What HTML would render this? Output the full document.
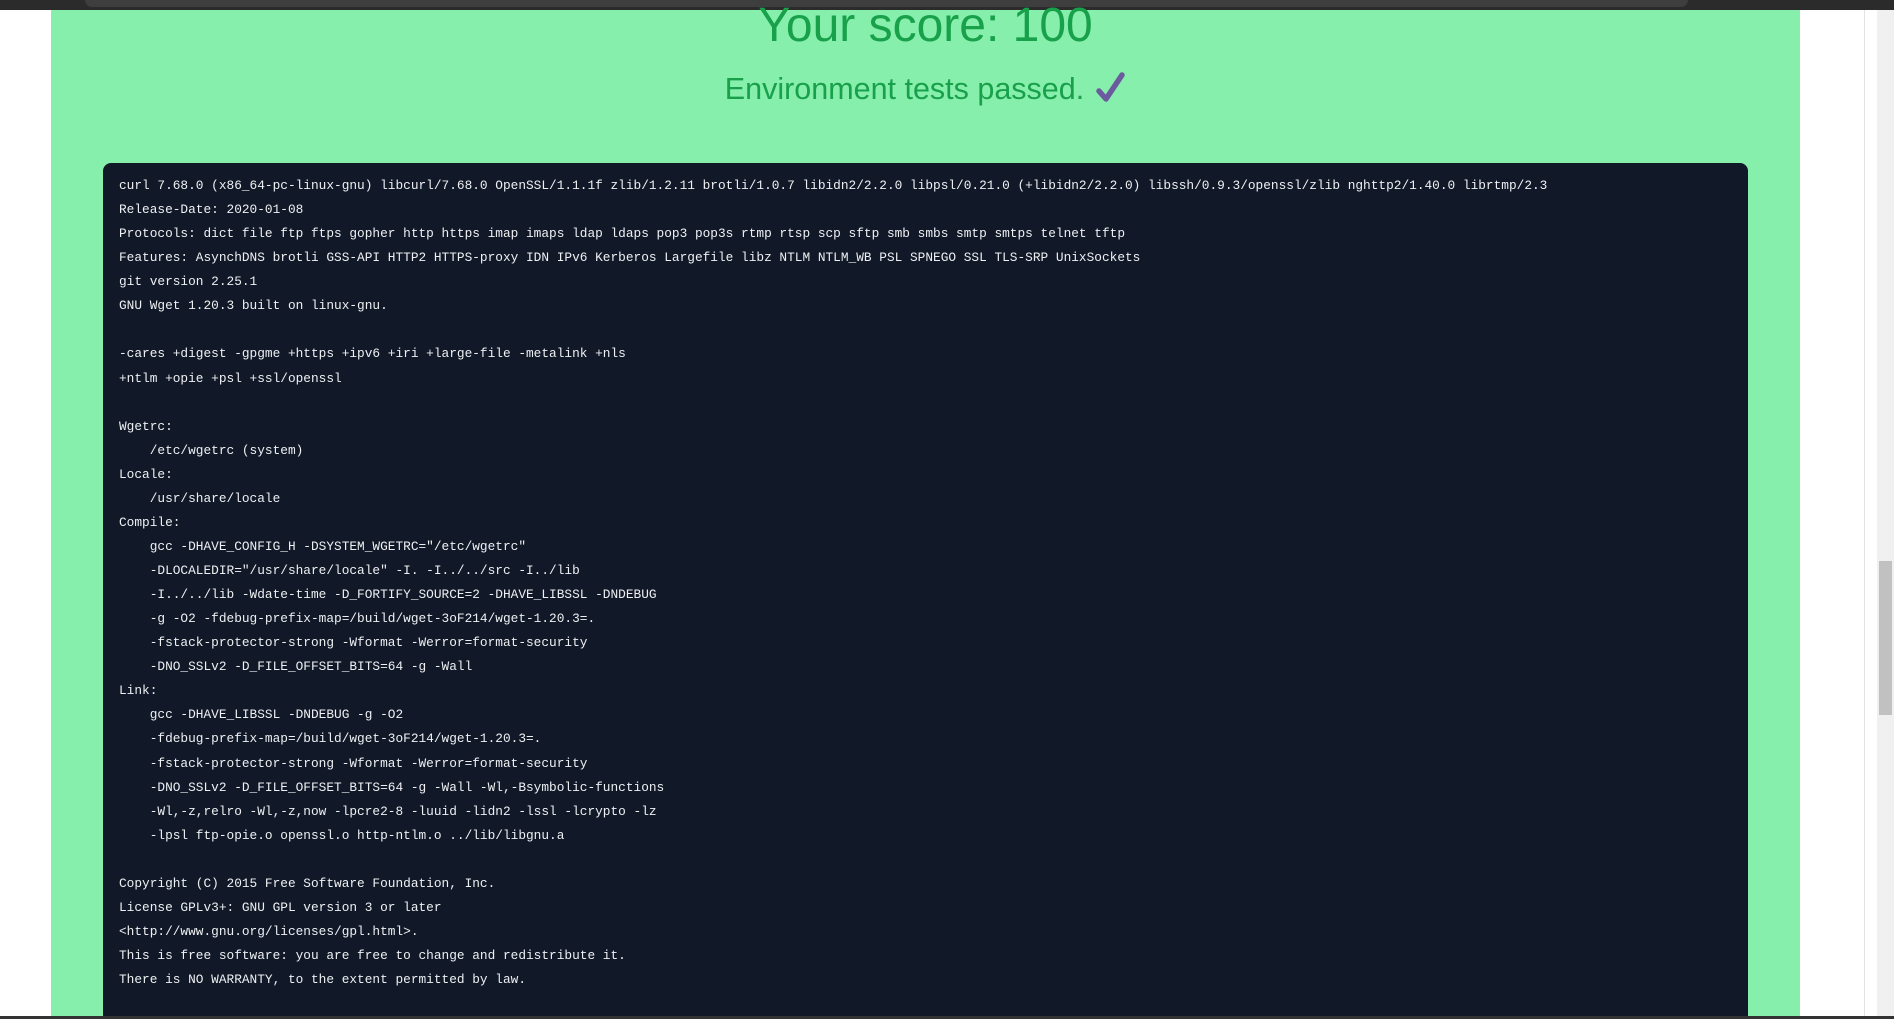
<!DOCTYPE html>
<html><head><meta charset="utf-8"><style>
html,body{margin:0;padding:0;width:1894px;height:1019px;overflow:hidden;background:#fff;position:relative;font-family:"Liberation Sans",sans-serif}
.top{position:absolute;left:0;top:0;width:1894px;height:10px;background:#2b2b2b}
.top i{position:absolute;left:85px;top:0;width:1603px;height:7px;background:#3e3e3e;border-radius:0 0 8px 8px}
.green{position:absolute;left:51px;top:10px;width:1749px;height:1009px;background:#86efac}
.h1{position:absolute;left:51px;width:1749px;top:-2px;text-align:center;font-size:48px;color:#18a04b;line-height:56px}
.h2{position:absolute;left:51px;width:1749px;top:71px;text-align:center;font-size:30.5px;color:#18a04b;line-height:36px}
.h2 svg{vertical-align:-4px;margin-left:10px}
.code{position:absolute;left:103px;top:163px;width:1645px;height:900px;background:#111827;border-radius:8px}
pre{margin:0;position:absolute;left:16px;top:11px;font-family:"Liberation Mono",monospace;font-size:12.8px;line-height:24.07px;color:#eef0f3}
.vline{position:absolute;left:1864px;top:10px;width:1px;height:1009px;background:#e3e3e3}
.sb{position:absolute;left:1877px;top:10px;width:17px;height:1006px;background:#f0f0f0}
.thumb{position:absolute;left:2px;top:551px;width:13px;height:154px;background:#c1c1c1}
.bot{position:absolute;left:0;top:1016px;width:1894px;height:3px;background:#333}
</style></head><body>
<div class="top"><i></i></div>
<div class="green"></div>
<div class="h1">Your score: 100</div>
<div class="h2">Environment tests passed.<svg width="32" height="32" viewBox="0 0 32 32"><path d="M5 20 L12 28 L28 4" fill="none" stroke="#6b5b9e" stroke-width="5.5" stroke-linecap="round" stroke-linejoin="round"/></svg></div>
<div class="code"><pre>curl 7.68.0 (x86_64-pc-linux-gnu) libcurl/7.68.0 OpenSSL/1.1.1f zlib/1.2.11 brotli/1.0.7 libidn2/2.2.0 libpsl/0.21.0 (+libidn2/2.2.0) libssh/0.9.3/openssl/zlib nghttp2/1.40.0 librtmp/2.3
Release-Date: 2020-01-08
Protocols: dict file ftp ftps gopher http https imap imaps ldap ldaps pop3 pop3s rtmp rtsp scp sftp smb smbs smtp smtps telnet tftp
Features: AsynchDNS brotli GSS-API HTTP2 HTTPS-proxy IDN IPv6 Kerberos Largefile libz NTLM NTLM_WB PSL SPNEGO SSL TLS-SRP UnixSockets
git version 2.25.1
GNU Wget 1.20.3 built on linux-gnu.

-cares +digest -gpgme +https +ipv6 +iri +large-file -metalink +nls
+ntlm +opie +psl +ssl/openssl

Wgetrc:
    /etc/wgetrc (system)
Locale:
    /usr/share/locale
Compile:
    gcc -DHAVE_CONFIG_H -DSYSTEM_WGETRC="/etc/wgetrc"
    -DLOCALEDIR="/usr/share/locale" -I. -I../../src -I../lib
    -I../../lib -Wdate-time -D_FORTIFY_SOURCE=2 -DHAVE_LIBSSL -DNDEBUG
    -g -O2 -fdebug-prefix-map=/build/wget-3oF214/wget-1.20.3=.
    -fstack-protector-strong -Wformat -Werror=format-security
    -DNO_SSLv2 -D_FILE_OFFSET_BITS=64 -g -Wall
Link:
    gcc -DHAVE_LIBSSL -DNDEBUG -g -O2
    -fdebug-prefix-map=/build/wget-3oF214/wget-1.20.3=.
    -fstack-protector-strong -Wformat -Werror=format-security
    -DNO_SSLv2 -D_FILE_OFFSET_BITS=64 -g -Wall -Wl,-Bsymbolic-functions
    -Wl,-z,relro -Wl,-z,now -lpcre2-8 -luuid -lidn2 -lssl -lcrypto -lz
    -lpsl ftp-opie.o openssl.o http-ntlm.o ../lib/libgnu.a

Copyright (C) 2015 Free Software Foundation, Inc.
License GPLv3+: GNU GPL version 3 or later
&lt;http://www.gnu.org/licenses/gpl.html&gt;.
This is free software: you are free to change and redistribute it.
There is NO WARRANTY, to the extent permitted by law.</pre></div>
<div class="vline"></div>
<div class="sb"><div class="thumb"></div></div>
<div class="bot"></div>
</body></html>
